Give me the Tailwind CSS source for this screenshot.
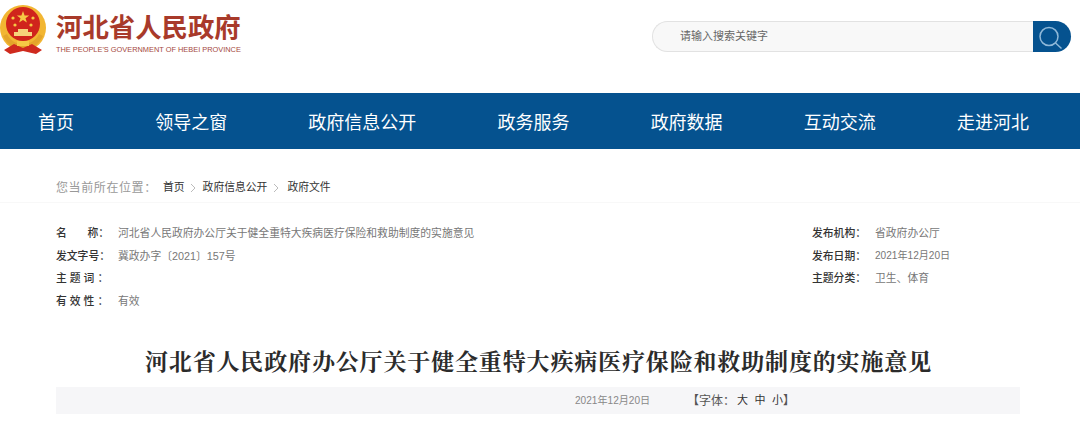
<!DOCTYPE html>
<html lang="zh-CN">
<head>
<meta charset="UTF-8">
<title>河北省人民政府</title>
<script src="https://cdn.jsdelivr.net/npm/@tailwindcss/browser@4"></script>
</head>
<body class="bg-white w-[1080px] h-[429px] overflow-hidden font-['Liberation_Sans','Noto_Sans_CJK_SC',sans-serif]">
  <!-- header -->
  <header class="h-[93px] flex justify-between items-start">
    <div class="flex pt-[4px]">
      <svg class="w-[48px] h-[52px]" viewBox="0 0 48 52">
        <circle cx="23" cy="24" r="23" fill="#f2b632"/>
        <circle cx="23" cy="20" r="17" fill="#d0241c"/>
        <path d="M23 7l1.6 4.4h4.6l-3.7 2.8 1.4 4.4-3.9-2.7-3.9 2.7 1.4-4.4-3.7-2.8h4.6z" fill="#f6c945"/>
        <circle cx="13" cy="14" r="1.6" fill="#f6c945"/><circle cx="33" cy="14" r="1.6" fill="#f6c945"/>
        <circle cx="15" cy="21" r="1.6" fill="#f6c945"/><circle cx="31" cy="21" r="1.6" fill="#f6c945"/>
        <path d="M14 32v-4h4v-3h10v3h4v4z" fill="#f6d27a"/>
        <path d="M3 32c4 8 10 13 20 14 10-1 16-6 20-14l-4-2c-3 6-8 10-16 10S10 36 7 30z" fill="#e4a52a"/>
        <path d="M4 46l10-6 9 4 9-4 10 6-6 4-13-3-13 3z" fill="#cf2a1e"/>
        <rect x="17" y="37" width="12" height="5" fill="#f6c945"/>
      </svg>
      <div class="ml-[8px] pt-[7px]">
        <div class="text-[#a83a2a] text-[26.4px] leading-[30px] font-bold font-['Noto_Sans_CJK_SC',sans-serif]">河北省人民政府</div>
        <div class="text-[#a5483c] text-[7.4px] leading-[10px] mt-[4px] whitespace-nowrap">THE PEOPLE'S GOVERNMENT OF HEBEI PROVINCE</div>
      </div>
    </div>
    <div class="flex mt-[21px] mr-[9px] w-[419px] h-[31px]">
      <div class="flex-1 bg-[#f8f8f8] border border-[#e2e2e2] border-r-0 rounded-l-full pl-[27px] text-[11px] leading-[29px] text-[#666]">请输入搜索关键字</div>
      <div class="w-[38px] bg-[#05528f] rounded-r-full flex items-center justify-center">
        <svg class="w-[26px] h-[26px]" viewBox="0 0 26 26" fill="none" stroke="#8fb8d8" stroke-width="1.5">
          <circle cx="10" cy="12.5" r="9"/>
          <path d="M16.5 19l6 5.5"/>
        </svg>
      </div>
    </div>
  </header>

  <!-- nav -->
  <nav class="h-[56px] bg-[#05528f] flex items-center text-white text-[18px] font-['Noto_Sans_CJK_SC',sans-serif] pl-[38px] pr-[51px] justify-between">
    <a>首页</a>
    <a>领导之窗</a>
    <a>政府信息公开</a>
    <a>政务服务</a>
    <a>政府数据</a>
    <a>互动交流</a>
    <a>走进河北</a>
  </nav>

  <!-- breadcrumb -->
  <div class="flex items-center pt-[30px] pb-[6px] pl-[56px] h-[54px] text-[10.8px] text-[#333] border-b border-[#f8f8f8]">
    <span class="text-[12px] text-[#999] tracking-[0.6px] w-[107px]">您当前所在位置：</span>
    <span>首页</span>
    <svg class="w-[18px] h-[12px]" viewBox="0 0 18 12" fill="none" stroke="#bbb"><path d="M6 2l4 4-4 4"/></svg>
    <span>政府信息公开</span>
    <svg class="w-[20px] h-[12px]" viewBox="0 0 20 12" fill="none" stroke="#bbb"><path d="M7 2l4 4-4 4"/></svg>
    <span>政府文件</span>
  </div>

  <!-- meta -->
  <div class="flex mt-[19px] mx-[56px] text-[10.8px] leading-[22.5px] text-[#777]">
    <div class="w-[756px]">
      <div class="flex"><span class="w-[62px] text-[#333] font-medium flex justify-between pr-[9px]"><span>名</span><span>称：</span></span><span>河北省人民政府办公厅关于健全重特大疾病医疗保险和救助制度的实施意见</span></div>
      <div class="flex"><span class="w-[62px] text-[#333] font-medium">发文字号：</span><span>冀政办字〔2021〕157号</span></div>
      <div class="flex"><span class="w-[62px] text-[#333] font-medium tracking-[3px]">主题词：</span></div>
      <div class="flex"><span class="w-[62px] text-[#333] font-medium tracking-[3px]">有效性：</span><span>有效</span></div>
    </div>
    <div>
      <div class="flex"><span class="w-[63px] text-[#333] font-medium">发布机构：</span><span>省政府办公厅</span></div>
      <div class="flex"><span class="w-[63px] text-[#333] font-medium">发布日期：</span><span class="text-[10.1px]">2021年12月20日</span></div>
      <div class="flex"><span class="w-[63px] text-[#333] font-medium">主题分类：</span><span>卫生、体育</span></div>
    </div>
  </div>

  <!-- title -->
  <h1 class="mt-[34px] pr-[3px] text-center text-[#2b2b2b] text-[23px] leading-[30px] font-bold tracking-[0.85px] font-['Noto_Serif_CJK_SC','Noto_Sans_CJK_SC',serif]">河北省人民政府办公厅关于健全重特大疾病医疗保险和救助制度的实施意见</h1>

  <!-- info bar -->
  <div class="flex items-center mt-[11px] ml-[56px] mr-[60px] h-[27px] bg-[#f6f6f8] text-[10.1px] text-[#888] pl-[519px]">
    <span class="w-[112px]">2021年12月20日</span>
    <span class="flex items-center text-[#555] text-[12px]">
      <span>【字体：</span>
      <span class="flex gap-[6.5px] ml-[2px] text-[11px] text-[#333]"><span>大</span><span>中</span><span>小</span></span>
      <span>】</span>
    </span>
  </div>
</body>
</html>
